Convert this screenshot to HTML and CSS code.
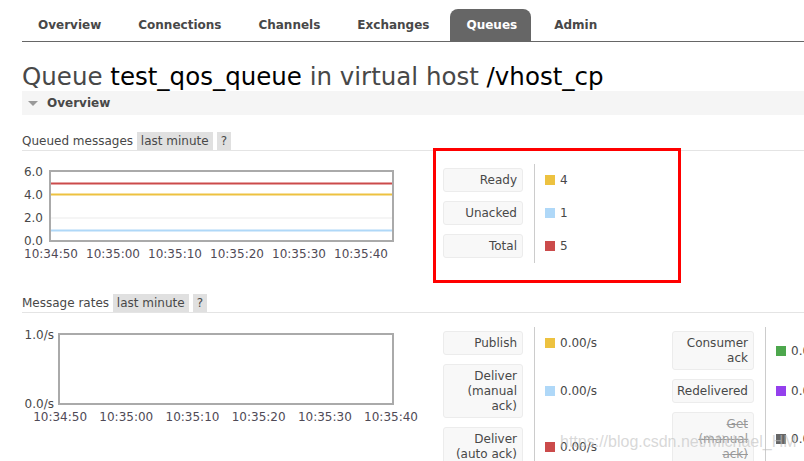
FILE: index.html
```html
<!DOCTYPE html>
<html>
<head>
<meta charset="utf-8">
<link rel="stylesheet" href="styles.css">
</head>
<body>
<div class="page">
  <nav class="tabs">
    <a class="tab">Overview</a>
    <a class="tab">Connections</a>
    <a class="tab">Channels</a>
    <a class="tab">Exchanges</a>
    <a class="tab active">Queues</a>
    <a class="tab">Admin</a>
  </nav>

  <h1 class="title"><span class="muted">Queue</span> test_qos_queue <span class="muted">in virtual host</span> /vhost_cp</h1>

  <h2 class="section-head"><span class="tri"></span>Overview</h2>

  <div class="sub-head first">Queued messages <span class="tag">last minute</span><span class="tag">?</span></div>
  <div class="chart-row">
    <div class="chart">
      <div class="plot-row">
        <div class="ylabels y1"><span>6.0</span><span>4.0</span><span>2.0</span><span>0.0</span></div>
        <svg class="plot p1" width="345" height="72" viewBox="0 0 345 72">
          <line x1="2" y1="48" x2="343" y2="48" stroke="#ebebeb" stroke-width="1"/>
          <line x1="2" y1="13.5" x2="343" y2="13.5" stroke="#cb4b4b" stroke-width="2"/>
          <line x1="2" y1="24.5" x2="343" y2="24.5" stroke="#edc240" stroke-width="2"/>
          <line x1="2" y1="60.5" x2="343" y2="60.5" stroke="#afd8f8" stroke-width="2"/>
          <rect x="1" y="1" width="343" height="70" fill="none" stroke="#aaaaaa" stroke-width="2"/>
        </svg>
      </div>
      <div class="xlabels x1"><span>10:34:50</span><span>10:35:00</span><span>10:35:10</span><span>10:35:20</span><span>10:35:30</span><span>10:35:40</span></div>
    </div>
    <table class="legend l1">
      <tr><th><div class="lbl">Ready</div></th><td class="val"><span class="sw yellow"></span>4</td></tr>
      <tr><th><div class="lbl">Unacked</div></th><td class="val"><span class="sw blue"></span>1</td></tr>
      <tr><th><div class="lbl">Total</div></th><td class="val"><span class="sw red"></span>5</td></tr>
    </table>
  </div>

  <div class="sub-head second">Message rates <span class="tag">last minute</span><span class="tag">?</span></div>
  <div class="chart-row">
    <div class="chart c2">
      <div class="plot-row">
        <div class="ylabels y2"><span>1.0/s</span><span>0.0/s</span></div>
        <svg class="plot p2" width="336" height="72" viewBox="0 0 336 72">
          <rect x="1" y="1" width="334" height="70" fill="none" stroke="#aaaaaa" stroke-width="2"/>
        </svg>
      </div>
      <div class="xlabels x2"><span>10:34:50</span><span>10:35:00</span><span>10:35:10</span><span>10:35:20</span><span>10:35:30</span><span>10:35:40</span></div>
    </div>
    <table class="legend l2">
      <tr><th><div class="lbl">Publish</div></th><td class="val"><span class="sw yellow"></span>0.00/s</td></tr>
      <tr><th><div class="lbl">Deliver<br>(manual<br>ack)</div></th><td class="val"><span class="sw blue"></span>0.00/s</td></tr>
      <tr><th><div class="lbl">Deliver<br>(auto ack)</div></th><td class="val"><span class="sw red"></span>0.00/s</td></tr>
    </table>
    <table class="legend l3">
      <tr><th><div class="lbl">Consumer<br>ack</div></th><td class="val"><span class="sw green"></span>0.00/s</td></tr>
      <tr><th><div class="lbl">Redelivered</div></th><td class="val"><span class="sw purple"></span>0.00/s</td></tr>
      <tr><th><div class="lbl struck">Get<br>(manual<br>ack)</div></th><td class="val"><span class="sw gray"></span>0.00/s</td></tr>
    </table>
  </div>
</div>

<div class="annot"></div>
<div class="watermark">https://blog.csdn.net/Michael_HM</div>
</body>
</html>
```

FILE: styles.css
```css
html, body {
  margin: 0;
  padding: 0;
  overflow: hidden;
  width: 804px;
  height: 461px;
  background: #fff;
}
body {
  font-family: "DejaVu Sans", Verdana, sans-serif;
  font-size: 12px;
  color: #484848;
  position: relative;
}
.page {
  padding-left: 22px;
  width: 900px;
}
.tabs {
  display: flex;
  margin-top: 9px;
  border-bottom: 1px solid #666;
  height: 32px;
}
.tab {
  font-weight: bold;
  font-size: 12px;
  line-height: 31px;
  padding: 1px 14px 0 16px;
  margin-right: 7px;
  color: #484848;
  border-radius: 8px 8px 0 0;
}
.tab.active {
  background: #666;
  color: #fff;
}
.title {
  margin: 21px 0 0;
  font-size: 24.5px;
  line-height: 28px;
  font-weight: normal;
  color: #000;
}
.title .muted { color: #484848; }
.section-head {
  margin: 0;
  height: 24px;
  line-height: 24px;
  background: #f5f5f5;
  font-size: 12px;
  font-weight: bold;
  color: #484848;
  display: flex;
  align-items: center;
}
.tri {
  width: 0;
  height: 0;
  border-left: 5px solid transparent;
  border-right: 5px solid transparent;
  border-top: 5px solid #999;
  margin: 1px 9px 0 6px;
}
.sub-head {
  border-bottom: 1px solid #e4e4e4;
  line-height: 18px;
  height: 18px;
  display: flex;
  align-items: center;
  white-space: pre;
}
.sub-head.first { margin-top: 17px; }
.sub-head.second { margin-top: 31px; }
.tag {
  background: #e0e0e0;
  padding: 0 4px;
  margin-right: 4px;
  line-height: 18px;
}
.chart-row {
  display: flex;
  align-items: flex-start;
}
.chart {
  padding-top: 14px;
  width: 421px;
  flex: none;
}
.c2 { padding-top: 15px; }
.plot-row {
  display: flex;
  align-items: flex-start;
}
.ylabels {
  display: flex;
  flex-direction: column;
  justify-content: space-between;
  height: 83px;
  text-align: right;
  line-height: 14px;
  color: #484848;
}
.y1 { width: 21px; }
.y2 { width: 32px; }
.plot {
  display: block;
  margin-top: 5px;
}
.p1 { margin-left: 6px; }
.p2 { margin-left: 4px; }
.xlabels {
  display: flex;
  line-height: 14px;
  color: #4f4a56;
}
.xlabels span { text-align: center; flex: none; }
.x1 { margin-top: -1px; margin-left: -2px; }
.x1 span { width: 62px; }
.x2 { margin-top: -1px; margin-left: 5px; }
.x2 span { width: 66.2px; }

.legend {
  border-collapse: collapse;
  margin-top: 13px;
  flex: none;
}
.l2, .l3 { margin-top: 14px; }
.legend th, .legend td {
  padding: 4px 0 5px;
  vertical-align: middle;
}
.legend th {
  padding-right: 11px;
  font-weight: normal;
}
.lbl {
  background: #f8f8f8;
  border: 1px solid #ececec;
  border-radius: 3px;
  text-align: right;
  padding: 4px 5px 3px 2px;
  line-height: 15px;
  white-space: nowrap;
}
.l1 .lbl, .l2 .lbl { width: 71px; }
.l3 .lbl { width: 73px; }
.struck { text-decoration: line-through; color: #999; }
.val {
  border-left: 1px solid #ccc;
  padding-left: 10px !important;
  white-space: nowrap;
  color: #484848;
}
.l2 .val { width: 127px; }
.sw {
  display: inline-block;
  width: 10px;
  height: 10px;
  margin-right: 5px;
  vertical-align: -1px;
}
.yellow { background: #edc240; }
.blue { background: #afd8f8; }
.red { background: #cb4b4b; }
.green { background: #4da74d; }
.purple { background: #9440ed; }
.gray { background: #666; }

.annot {
  position: absolute;
  left: 433px;
  top: 148px;
  width: 248px;
  height: 135px;
  box-sizing: border-box;
  border: 3px solid #f00;
}
.watermark {
  position: absolute;
  left: 560px;
  top: 433px;
  font-family: "Liberation Sans", Arial, sans-serif;
  font-size: 16px;
  color: rgba(190, 190, 190, 0.6);
  white-space: nowrap;
}
```
